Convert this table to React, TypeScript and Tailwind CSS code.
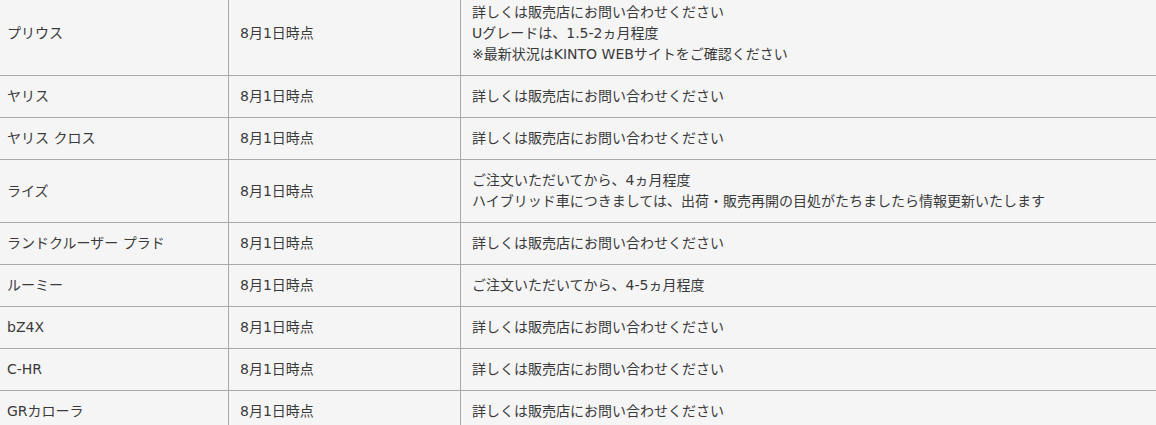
const rows: { name: string; date: string; notes: string[] }[] = [
  {
    name: "プリウス",
    date: "8月1日時点",
    notes: [
      "詳しくは販売店にお問い合わせください",
      "Uグレードは、1.5-2ヵ月程度",
      "※最新状況はKINTO WEBサイトをご確認ください",
    ],
  },
  { name: "ヤリス", date: "8月1日時点", notes: ["詳しくは販売店にお問い合わせください"] },
  { name: "ヤリス クロス", date: "8月1日時点", notes: ["詳しくは販売店にお問い合わせください"] },
  {
    name: "ライズ",
    date: "8月1日時点",
    notes: [
      "ご注文いただいてから、4ヵ月程度",
      "ハイブリッド車につきましては、出荷・販売再開の目処がたちましたら情報更新いたします",
    ],
  },
  { name: "ランドクルーザー プラド", date: "8月1日時点", notes: ["詳しくは販売店にお問い合わせください"] },
  { name: "ルーミー", date: "8月1日時点", notes: ["ご注文いただいてから、4-5ヵ月程度"] },
  { name: "bZ4X", date: "8月1日時点", notes: ["詳しくは販売店にお問い合わせください"] },
  { name: "C-HR", date: "8月1日時点", notes: ["詳しくは販売店にお問い合わせください"] },
  { name: "GRカローラ", date: "8月1日時点", notes: ["詳しくは販売店にお問い合わせください"] },
];

export default function App() {
  return (
    <div className="h-[425px] w-[1156px] overflow-hidden bg-[#f5f5f5]">
      <div
        className="-ml-[4px] -mt-[8px] w-[1180px] text-[14px] leading-[21px] text-[#3a3a3a]"
        style={{ fontFamily: '"DejaVu Sans", "Noto Sans CJK JP", sans-serif' }}
      >
        {rows.map((r) => (
          <div key={r.name} className="flex border-b border-[#aaa]">
            <div className="flex w-[233px] shrink-0 items-center border-r border-[#aaa] px-[11px] py-[10px]">
              {r.name}
            </div>
            <div className="flex w-[232px] shrink-0 items-center border-r border-[#aaa] px-[11px] py-[10px]">
              {r.date}
            </div>
            <div className="flex-1 px-[11px] py-[10px]">
              {r.notes.map((n) => (
                <div key={n}>{n}</div>
              ))}
            </div>
          </div>
        ))}
      </div>
    </div>
  );
}
